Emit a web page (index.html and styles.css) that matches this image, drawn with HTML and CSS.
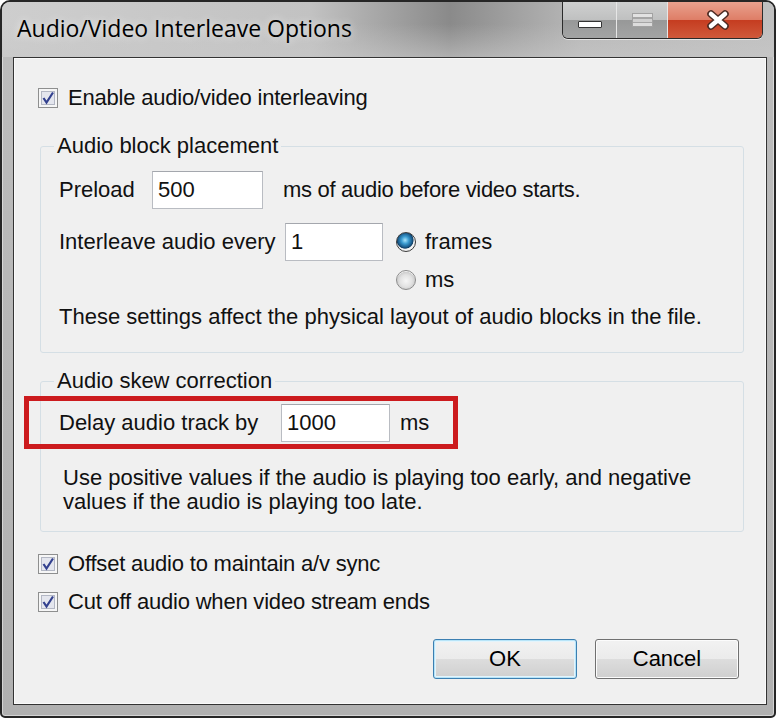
FILE: index.html
```html
<!DOCTYPE html>
<html lang="en">
<head>
    <meta charset="UTF-8">
    <meta name="viewport" content="width=device-width, initial-scale=1.0">
    <title>Audio/Video Interleave Options</title>
    <link rel="stylesheet" href="styles.css">
</head>
<body>
    <div class="window">
        <div class="titlebar">
            <div class="title">Audio/Video Interleave Options</div>
            <div class="caption-buttons">
                <div class="cap cap-min"><span class="glyph-min"></span></div>
                <div class="cap cap-max"><span class="glyph-max"></span></div>
                <div class="cap cap-close">
                    <svg width="26" height="20" viewBox="0 0 26 20">
                        <path d="M6 4 L20 16 M20 4 L6 16" stroke="#4b2a22" stroke-width="7.5" stroke-linecap="round" fill="none"/>
                        <path d="M6 4 L20 16 M20 4 L6 16" stroke="#ffffff" stroke-width="4.5" stroke-linecap="round" fill="none"/>
                    </svg>
                </div>
            </div>
        </div>

        <div class="client">
            <label class="check">
                <svg class="box" width="20" height="20" viewBox="0 0 20 20">
                    <rect x="0.5" y="0.5" width="19" height="19" fill="#f6f6f6" stroke="#8e8f8f"/>
                    <rect x="3.5" y="3.5" width="13" height="13" fill="#e4e6ee" stroke="#b3b7c4"/>
                    <path d="M5.5 10 L8.5 14.5 L15 4.5" fill="none" stroke="#33418f" stroke-width="2.2"/>
                </svg>
                Enable audio/video interleaving
            </label>

            <fieldset class="group group-placement">
                <legend>Audio block placement</legend>
                <div class="row">
                    <span class="lbl lbl-preload">Preload</span>
                    <input class="field field-preload" type="text" value="500">
                    <span class="lbl after-preload">ms of audio before video starts.</span>
                </div>
                <div class="row row-interleave">
                    <span class="lbl lbl-interleave">Interleave audio every</span>
                    <input class="field field-interleave" type="text" value="1">
                    <div class="radios">
                        <label class="radio"><span class="dot dot-on"></span>frames</label>
                        <label class="radio"><span class="dot"></span>ms</label>
                    </div>
                </div>
                <p class="note">These settings affect the physical layout of audio blocks in the file.</p>
            </fieldset>

            <fieldset class="group group-skew">
                <legend>Audio skew correction</legend>
                <div class="row row-delay">
                    <span class="lbl lbl-delay">Delay audio track by</span>
                    <input class="field field-delay" type="text" value="1000">
                    <span class="lbl after-delay">ms</span>
                    <div class="highlight"></div>
                </div>
                <p class="note note-skew">Use positive values if the audio is playing too early, and negative<br>values if the audio is playing too late.</p>
            </fieldset>

            <label class="check check-offset">
                <svg class="box" width="20" height="20" viewBox="0 0 20 20">
                    <rect x="0.5" y="0.5" width="19" height="19" fill="#f6f6f6" stroke="#8e8f8f"/>
                    <rect x="3.5" y="3.5" width="13" height="13" fill="#e4e6ee" stroke="#b3b7c4"/>
                    <path d="M5.5 10 L8.5 14.5 L15 4.5" fill="none" stroke="#33418f" stroke-width="2.2"/>
                </svg>
                Offset audio to maintain a/v sync
            </label>
            <label class="check check-cut">
                <svg class="box" width="20" height="20" viewBox="0 0 20 20">
                    <rect x="0.5" y="0.5" width="19" height="19" fill="#f6f6f6" stroke="#8e8f8f"/>
                    <rect x="3.5" y="3.5" width="13" height="13" fill="#e4e6ee" stroke="#b3b7c4"/>
                    <path d="M5.5 10 L8.5 14.5 L15 4.5" fill="none" stroke="#33418f" stroke-width="2.2"/>
                </svg>
                Cut off audio when video stream ends
            </label>

            <div class="actions">
                <button type="button" class="btn btn-default">OK</button>
                <button type="button" class="btn">Cancel</button>
            </div>
        </div>
    </div>
</body>
</html>
```

FILE: styles.css
```css
body {
    margin: 0;
    background: #ffffff;
    font-family: "Liberation Sans", Arial, sans-serif;
    color: #111;
}
.window {
    width: 776px;
    height: 718px;
    box-sizing: border-box;
    border: 2px solid #262626;
    border-radius: 10px 10px 5px 5px;
    background: linear-gradient(to bottom, #bdbdbd, #b0b0b0);
    box-shadow: inset 0 0 0 1px rgba(255,255,255,0.45);
    display: flex;
    flex-direction: column;
    overflow: hidden;
}
.titlebar {
    height: 55px;
    flex: none;
    display: flex;
    justify-content: space-between;
    align-items: flex-start;
    padding: 0 11px 0 15px;
    background:
        linear-gradient(to bottom, rgba(255,255,255,0) 40%, rgba(200,200,200,0.6) 100%),
        linear-gradient(to right, #cecece 0%, #c2c2c2 40%, #8a8a8a 58%, #a0a0a0 66%, #b8b8b8 75%, #c0c0c0 100%);
}
.title {
    font-family: "Open Sans", "Noto Sans", sans-serif;
    font-size: 23px;
    line-height: 28px;
    padding-top: 12px;
    color: #000;
    text-shadow: 0 0 8px rgba(255,255,255,0.8);
}
.caption-buttons {
    display: flex;
    height: 36px;
    border: 1px solid #2b2b2b;
    border-top: none;
    border-radius: 0 0 6px 6px;
    overflow: hidden;
    box-shadow: 0 1px 0 rgba(255,255,255,0.6);
}
.cap {
    display: flex;
    justify-content: center;
    box-sizing: border-box;
}
.cap-min, .cap-max {
    background: linear-gradient(to bottom, #cfd0d0 0%, #bfc0c0 50%, #979898 50%, #a3a4a4 100%);
    border-right: 1px solid #e6e6e6;
}
.cap-min {
    width: 54px;
    align-items: flex-start;
    padding-top: 19px;
}
.cap-max {
    width: 51px;
    align-items: flex-start;
    padding-top: 11px;
}
.cap-close {
    width: 94px;
    align-items: flex-start;
    padding-top: 8px;
    padding-left: 6px;
    background: linear-gradient(to bottom, #e9a18e 0%, #de7d66 50%, #c53c20 50%, #d0593b 100%);
}
.glyph-min {
    width: 24px;
    height: 7px;
    box-sizing: border-box;
    border: 1px solid #333;
    border-radius: 1px;
    background: #fff;
}
.glyph-max {
    width: 21px;
    height: 14px;
    box-sizing: border-box;
    border: 1px solid #a2a2a2;
    background: linear-gradient(to bottom, #e2e2e2 0 3px, #a6a6a6 3px 5px, #d0d0d0 5px 8px, #a6a6a6 8px 9px, #dcdcdc 9px);
}
.client {
    height: 648px;
    flex: none;
    box-sizing: border-box;
    margin: 0 7px 0 11px;
    border: 1px solid #333;
    background: #f0f0f0;
    box-shadow: inset 0 0 0 1px #fafafa;
    padding: 29px 22px 0 24px;
    font-size: 22px;
    line-height: 22px;
}
.check {
    display: flex;
    align-items: center;
    gap: 10px;
    height: 22px;
    letter-spacing: -0.2px;
}
.box {
    flex: none;
    margin-top: -1px;
}
.check-offset {
    margin-top: 21px;
}
.check-cut {
    margin-top: 16px;
}
.group {
    margin: 26px 0 0 2px;
    padding: 14px 0 24px 18px;
    border: 1px solid #d5dfe5;
    border-radius: 3px;
    min-inline-size: auto;
}
.group legend {
    padding: 0 3px;
    margin-left: -5px;
    line-height: 22px;
}
.group-skew {
    margin-top: 17px;
    padding: 12px 0 17px 18px;
}
.row {
    display: flex;
    align-items: flex-start;
}
.row-interleave {
    margin-top: 14px;
}
.row-delay {
    position: relative;
}
.lbl {
    height: 38px;
    display: flex;
    align-items: center;
    white-space: nowrap;
}
.lbl-preload {
    width: 93px;
}
.lbl-interleave {
    width: 226px;
}
.lbl-delay {
    width: 222px;
}
.after-preload {
    margin-left: 20px;
    letter-spacing: -0.3px;
}
.after-delay {
    margin-left: 10px;
}
.field {
    height: 38px;
    box-sizing: border-box;
    margin: 0;
    padding: 0 5px;
    border: 1px solid #b9bcc2;
    border-top-color: #a4a7ad;
    background: #fff;
    font-family: inherit;
    font-size: 22px;
    color: #111;
    outline: none;
}
.field-preload {
    width: 111px;
}
.field-interleave {
    width: 98px;
}
.field-delay {
    width: 109px;
}
.radios {
    display: flex;
    flex-direction: column;
    margin-left: 13px;
}
.radio {
    height: 38px;
    display: flex;
    align-items: center;
    gap: 9px;
}
.dot {
    width: 20px;
    height: 20px;
    box-sizing: border-box;
    border-radius: 50%;
    border: 1px solid #8b8b8b;
    background: radial-gradient(circle at 50% 55%, #f6f6f6 0%, #e2e2e2 45%, #cfcfcf 65%, #f4f4f4 70%);
}
.dot-on {
    border-color: #3c3c3c;
    background: radial-gradient(circle at 45% 40%, #a9e4fb 0%, #3b9bd0 25%, #1a5a8a 48%, #123e62 55%, #f4f4f4 60%, #e8e8e8 100%);
}
.note {
    margin: 7px 0 0 0;
    white-space: nowrap;
}
.note-skew {
    margin: 24px 0 0 4px;
    line-height: 24px;
}
.highlight {
    position: absolute;
    left: -35px;
    top: -8px;
    width: 434px;
    height: 53px;
    box-sizing: border-box;
    border: 5px solid #cc1b1e;
    pointer-events: none;
}
.actions {
    display: flex;
    justify-content: flex-end;
    gap: 18px;
    margin-top: 26px;
    padding-right: 5px;
}
.btn {
    width: 144px;
    height: 40px;
    border: 1px solid #707070;
    border-radius: 3px;
    background: linear-gradient(to bottom, #f2f2f2 0%, #ebebeb 50%, #dddddd 50%, #cfcfcf 100%);
    box-shadow: inset 0 0 0 1px #fcfcfc;
    font-family: "Liberation Sans", Arial, sans-serif;
    font-size: 22px;
    color: #000;
    padding: 0;
}
.btn-default {
    border-color: #3c7fb1;
    box-shadow: inset 0 0 0 1px #b7e4f8, inset 0 0 0 2px #e3f4fc;
}
```
